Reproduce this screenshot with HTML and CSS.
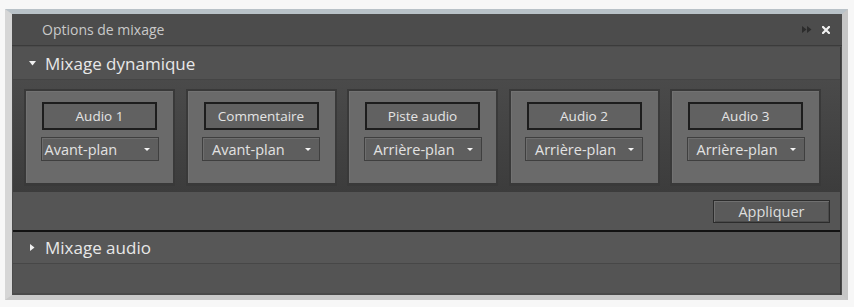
FILE: index.html
```html
<!DOCTYPE html>
<html lang="fr">
<head>
<meta charset="utf-8">
<title>Options de mixage</title>
<link rel="stylesheet" href="styles.css">
</head>
<body>
<div class="frame">
  <div class="panel">
    <div class="titlebar">
      <span class="title">Options de mixage</span>
      <div class="tb-icons">
        <svg class="ico-more" width="10" height="7" viewBox="0 0 10 7"><path d="M0 0L4.5 3.5L0 7Z M5 0L9.5 3.5L5 7Z" fill="#2c2c2c"/></svg>
        <svg class="ico-close" width="8" height="8" viewBox="0 0 8 8"><path d="M1 1L7 7M7 1L1 7" stroke="#f2f2f2" stroke-width="2.2" stroke-linecap="square"/></svg>
      </div>
    </div>
    <div class="section">
      <div class="sec-head">
        <svg class="tri" width="7" height="5" viewBox="0 0 7 5"><path d="M0 0H7L3.5 4.5Z" fill="#f0f0f0"/></svg>
        <span>Mixage dynamique</span>
      </div>
      <div class="cards">
        <div class="card">
          <div class="name">Audio 1</div>
          <div class="select tight"><span>Avant-plan</span><i class="arrow"></i></div>
        </div>
        <div class="card">
          <div class="name">Commentaire</div>
          <div class="select"><span>Avant-plan</span><i class="arrow"></i></div>
        </div>
        <div class="card">
          <div class="name">Piste audio</div>
          <div class="select"><span>Arrière-plan</span><i class="arrow"></i></div>
        </div>
        <div class="card">
          <div class="name">Audio 2</div>
          <div class="select"><span>Arrière-plan</span><i class="arrow"></i></div>
        </div>
        <div class="card">
          <div class="name">Audio 3</div>
          <div class="select"><span>Arrière-plan</span><i class="arrow"></i></div>
        </div>
      </div>
      <div class="actions">
        <button class="btn">Appliquer</button>
      </div>
      <div class="sec-head closed">
        <svg class="tri" width="5" height="7" viewBox="0 0 5 7"><path d="M0 0V7L4.5 3.5Z" fill="#f0f0f0"/></svg>
        <span>Mixage audio</span>
      </div>
      <div class="filler"></div>
    </div>
  </div>
</div>
</body>
</html>
```
FILE: styles.css
```css
html, body {
  margin: 0;
  padding: 0;
  background: #f7f7f7;
}
body {
  padding: 9px 0 0 5px;
  font-family: "Open Sans", "Noto Sans", sans-serif;
}
.frame {
  width: 830px;
  border-top: 5px solid #b9c2c8;
  border-left: 7px solid #d6d6d6;
  border-right: 6px solid #c6c6c6;
  border-bottom: 5px solid #c9c9c9;
}
.panel {
  background: #4b4b4b;
  height: 281px;
  display: flex;
  flex-direction: column;
}
.titlebar {
  height: 31px;
  display: flex;
  align-items: center;
  justify-content: space-between;
  padding: 0 12px 0 30px;
  background: #4c4c4c;
  border-bottom: 1px solid #3b3b3b;
}
.title {
  font-size: 14px;
  color: #c9c9c9;
}
.tb-icons {
  display: flex;
  align-items: center;
  gap: 10px;
}
.section {
  flex: 1;
  margin: 1px 1px 0 1px;
  border-right: 1px solid #3a3a3a;
  display: flex;
  flex-direction: column;
  background: #555;
}
.sec-head {
  height: 32px;
  display: flex;
  align-items: center;
  gap: 9px;
  padding-left: 16px;
  background: #525252;
  border-bottom: 1px solid #454545;
  color: #e8e8e8;
  font-size: 17px;
}
.sec-head.closed {
  height: 31px;
  background: #575757;
  border-top: 2px solid #121212;
  border-bottom: 1px solid #474747;
}
.sec-head.closed .tri {
  margin-left: 1px;
  margin-right: 1px;
}
.cards {
  display: flex;
  gap: 10.5px;
  padding: 9px 0 6px 11px;
  background: linear-gradient(#4a4a4a, #3c3c3c);
}
.card {
  width: 147px;
  height: 92px;
  background: #6a6a6a;
  border: 2px solid #393939;
  border-bottom-width: 3px;
  box-shadow: inset 1px 1px 0 #727272;
  display: flex;
  flex-direction: column;
  align-items: center;
}
.name {
  margin-top: 11px;
  width: 111px;
  height: 24px;
  border: 2px solid #1d1d1d;
  background: #616161;
  color: #e4e4e4;
  font-size: 13.5px;
  display: flex;
  align-items: center;
  justify-content: center;
}
.select {
  margin-top: 7px;
  height: 22px;
  width: 99px;
  border: 1px solid #3f3f3f;
  box-shadow: inset 1px 1px 0 #6e6e6e;
  background: #5e5e5e;
  color: #e2e2e2;
  font-size: 14.5px;
  display: flex;
  align-items: center;
  justify-content: space-between;
  padding: 0 8px 0 9px;
}
.select.tight {
  padding-left: 3px;
  width: 105px;
}
.arrow {
  width: 0;
  height: 0;
  border-left: 3px solid transparent;
  border-right: 3px solid transparent;
  border-top: 3px solid #f4f4f4;
}
.actions {
  height: 38px;
  display: flex;
  align-items: center;
  justify-content: flex-end;
  padding-right: 10px;
  background: #555;
}
.btn {
  width: 117px;
  height: 23px;
  margin-top: 1px;
  background: #5a5a5a;
  border: 1px solid #2c2c2c;
  box-shadow: inset 1px 1px 0 #707070, inset -1px -1px 0 #4a4a4a;
  color: #dedede;
  font-family: "Open Sans", "Noto Sans", sans-serif;
  font-size: 14.5px;
  padding: 0;
}
.filler {
  flex: 1;
  background: #545454;
  border-bottom: 2px solid #4a4a4a;
}
```
